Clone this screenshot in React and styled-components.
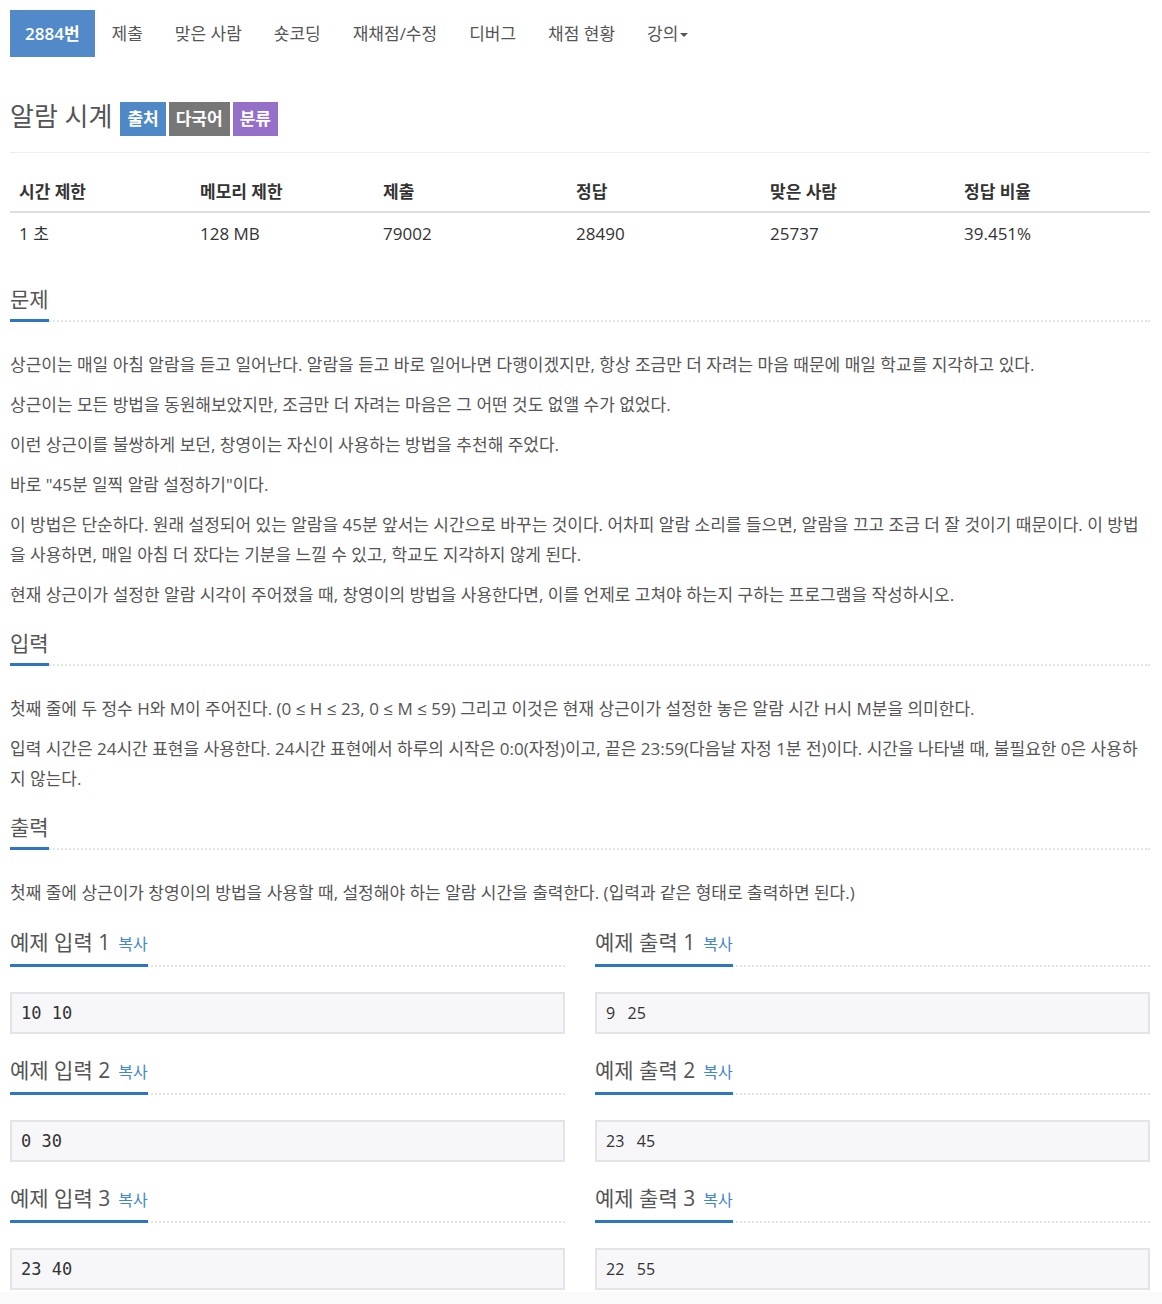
import React from "react";
import styled, { createGlobalStyle } from "styled-components";

const GlobalStyle = createGlobalStyle`
  body {
    margin: 0;
    background: #fff;
    color: #555;
    font-family: "Open Sans", "Noto Sans CJK KR", sans-serif;
    font-size: 17px;
  }
`;

const menu = ["2884번", "제출", "맞은 사람", "숏코딩", "재채점/수정", "디버그", "채점 현황"];

const stats = [
  { label: "시간 제한", value: "1 초", width: 181 },
  { label: "메모리 제한", value: "128 MB", width: 183 },
  { label: "제출", value: "79002", width: 193 },
  { label: "정답", value: "28490", width: 194 },
  { label: "맞은 사람", value: "25737", width: 194 },
  { label: "정답 비율", value: "39.451%", width: 195 },
];

const sections = [
  {
    title: "문제",
    paragraphs: [
      "상근이는 매일 아침 알람을 듣고 일어난다. 알람을 듣고 바로 일어나면 다행이겠지만, 항상 조금만 더 자려는 마음 때문에 매일 학교를 지각하고 있다.",
      "상근이는 모든 방법을 동원해보았지만, 조금만 더 자려는 마음은 그 어떤 것도 없앨 수가 없었다.",
      "이런 상근이를 불쌍하게 보던, 창영이는 자신이 사용하는 방법을 추천해 주었다.",
      "바로 \"45분 일찍 알람 설정하기\"이다.",
      "이 방법은 단순하다. 원래 설정되어 있는 알람을 45분 앞서는 시간으로 바꾸는 것이다. 어차피 알람 소리를 들으면, 알람을 끄고 조금 더 잘 것이기 때문이다. 이 방법을 사용하면, 매일 아침 더 잤다는 기분을 느낄 수 있고, 학교도 지각하지 않게 된다.",
      "현재 상근이가 설정한 알람 시각이 주어졌을 때, 창영이의 방법을 사용한다면, 이를 언제로 고쳐야 하는지 구하는 프로그램을 작성하시오.",
    ],
  },
  {
    title: "입력",
    paragraphs: [
      "첫째 줄에 두 정수 H와 M이 주어진다. (0 ≤ H ≤ 23, 0 ≤ M ≤ 59) 그리고 이것은 현재 상근이가 설정한 놓은 알람 시간 H시 M분을 의미한다.",
      "입력 시간은 24시간 표현을 사용한다. 24시간 표현에서 하루의 시작은 0:0(자정)이고, 끝은 23:59(다음날 자정 1분 전)이다. 시간을 나타낼 때, 불필요한 0은 사용하지 않는다.",
    ],
  },
  {
    title: "출력",
    paragraphs: [
      "첫째 줄에 상근이가 창영이의 방법을 사용할 때, 설정해야 하는 알람 시간을 출력한다. (입력과 같은 형태로 출력하면 된다.)",
    ],
  },
];

const samples = [
  { input: "10 10", output: "9   25" },
  { input: "0 30", output: "23   45" },
  { input: "23 40", output: "22   55" },
];

function Headline({ children, link }) {
  return (
    <StyledHeadline>
      <StyledHeadlineText>
        {children}
        {link && <StyledCopy>{link}</StyledCopy>}
      </StyledHeadlineText>
    </StyledHeadline>
  );
}

function SampleBlock({ title, data, mono }) {
  return (
    <div>
      <Headline link="복사">{title}</Headline>
      <StyledSample mono={mono ? 1 : 0}>{data}</StyledSample>
    </div>
  );
}

export default function App() {
  return (
    <>
      <GlobalStyle />
      <StyledPage>
        <StyledNav>
          {menu.map((item, i) => (
            <StyledNavItem key={item} active={i === 0 ? 1 : 0}>{item}</StyledNavItem>
          ))}
          <StyledNavItem>
            강의<StyledCaret />
          </StyledNavItem>
        </StyledNav>

        <StyledPageHeader>
          <StyledTitle>알람 시계</StyledTitle>
          <StyledBadge color="#4f88c6">출처</StyledBadge>
          <StyledBadge color="#777777">다국어</StyledBadge>
          <StyledBadge color="#9570c9">분류</StyledBadge>
        </StyledPageHeader>

        <StyledTable>
          <thead>
            <tr>
              {stats.map((s) => (
                <StyledTh key={s.label} style={{ width: s.width }}>{s.label}</StyledTh>
              ))}
            </tr>
          </thead>
          <tbody>
            <tr>
              {stats.map((s) => (
                <StyledTd key={s.label}>{s.value}</StyledTd>
              ))}
            </tr>
          </tbody>
        </StyledTable>

        {sections.map((sec) => (
          <StyledSection key={sec.title}>
            <Headline>{sec.title}</Headline>
            <StyledBody>
              {sec.paragraphs.map((p, i) => (
                <StyledParagraph key={i}>{p}</StyledParagraph>
              ))}
            </StyledBody>
          </StyledSection>
        ))}

        <StyledSampleGrid>
          {samples.map((s, i) => (
            <React.Fragment key={i}>
              <SampleBlock title={`예제 입력 ${i + 1}`} data={s.input} mono />
              <SampleBlock title={`예제 출력 ${i + 1}`} data={s.output} />
            </React.Fragment>
          ))}
        </StyledSampleGrid>
      </StyledPage>
      <StyledFooter />
    </>
  );
}

const StyledPage = styled.div`
  width: 1140px;
  padding: 10px 10px 0;
`;

const StyledNav = styled.ul`
  display: flex;
  gap: 2px;
  margin: 0;
  padding: 0;
  list-style: none;
`;

const StyledNavItem = styled.li`
  display: flex;
  align-items: center;
  padding: 12px 15px;
  line-height: 23px;
  font-size: 17px;
  color: ${(p) => (p.active ? "#fff" : "#555")};
  background: ${(p) => (p.active ? "#5289c8" : "transparent")};
  font-weight: ${(p) => (p.active ? 600 : 400)};
`;

const StyledCaret = styled.span`
  display: inline-block;
  margin-left: 2px;
  margin-top: 2px;
  border-top: 4px solid #555;
  border-left: 4px solid transparent;
  border-right: 4px solid transparent;
`;

const StyledPageHeader = styled.div`
  display: flex;
  align-items: flex-start;
  gap: 3px;
  margin-top: 45px;
  padding-bottom: 16px;
  border-bottom: 1px solid #eee;
`;

const StyledTitle = styled.h1`
  margin: -3px 5px 0 0;
  font-size: 26px;
  font-weight: 400;
  line-height: 34px;
  color: #555;
`;

const StyledBadge = styled.span`
  display: inline-block;
  padding: 0 7px;
  height: 34px;
  line-height: 34px;
  font-size: 17px;
  font-weight: 700;
  color: #fff;
  background: ${(p) => p.color};
`;

const StyledTable = styled.table`
  width: 100%;
  margin-top: 19px;
  border-collapse: collapse;
  table-layout: fixed;
  color: #333;
`;

const StyledTh = styled.th`
  box-sizing: border-box;
  padding: 8px 8px 8px 9px;
  line-height: 23px;
  font-size: 17px;
  font-weight: 700;
  text-align: left;
  border-bottom: 2px solid #ddd;
`;

const StyledTd = styled.td`
  padding: 9px 8px 8px 9px;
  line-height: 23px;
  font-size: 17px;
`;

const StyledSection = styled.section`
  margin-top: 31px;
  & + & {
    margin-top: 0;
  }
`;

const StyledHeadline = styled.div`
  border-bottom: 2px dotted #e4e4e8;
`;

const StyledHeadlineText = styled.h2`
  display: inline-block;
  margin: 0 0 -2px;
  padding-bottom: 5px;
  font-size: 21px;
  font-weight: 400;
  line-height: 30px;
  color: #555;
  border-bottom: 3px solid #2f76c0;
`;

const StyledCopy = styled.a`
  margin-left: 8px;
  font-size: 16px;
  color: #3f85c9;
`;

const StyledBody = styled.div`
  padding: 28px 0 8px;
`;

const StyledParagraph = styled.p`
  margin: 0 0 10px;
  line-height: 30px;
  font-size: 17px;
  color: #555;
`;

const StyledSampleGrid = styled.div`
  display: grid;
  grid-template-columns: 1fr 1fr;
  column-gap: 30px;
  row-gap: 21px;
  margin-top: 1px;
`;

const StyledSample = styled.pre`
  margin: 25px 0 0;
  padding: 8px 9px;
  height: 22px;
  line-height: 22px;
  font-family: ${(p) => (p.mono ? '"DejaVu Sans Mono", monospace' : '"Open Sans", sans-serif')};
  font-size: ${(p) => (p.mono ? "17px" : "16px")};
  color: #333;
  background: #f7f7f9;
  border: 2px solid #e3e3e8;
  white-space: pre;
`;

const StyledFooter = styled.div`
  height: 40px;
  margin-top: 2px;
  background: #fafafa;
`;
